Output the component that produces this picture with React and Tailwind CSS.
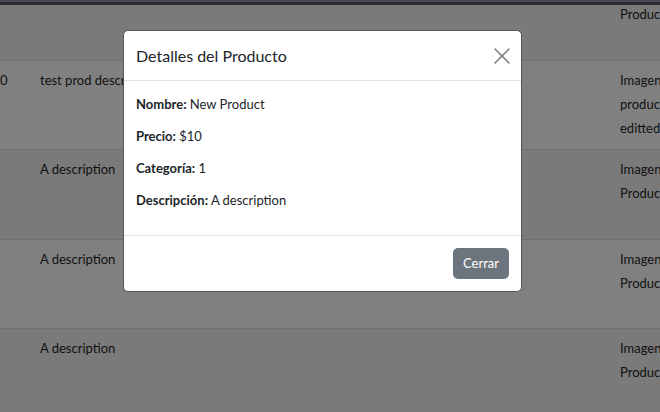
import { X } from 'lucide-react'

const ROWS = [
  { h: 'h-[89px]', bg: 'bg-[#808080]', id: '0', desc: 'test prod description', img: ['Imagen', 'producto', 'editted'] },
  { h: 'h-[90px]', bg: 'bg-[#7a7a7a]', id: '', desc: 'A description', img: ['Imagen', 'Producto'] },
  { h: 'h-[89px]', bg: 'bg-[#808080]', id: '', desc: 'A description', img: ['Imagen', 'Producto'] },
  { h: 'h-[90px]', bg: 'bg-[#7a7a7a]', id: '', desc: 'A description', img: ['Imagen', 'Producto'] },
]

function Row({ row }) {
  return (
    <div className={`flex ${row.h} ${row.bg} border-b border-[#6f7173] text-[#111] text-[13px] leading-[24px] pt-[7px]`}>
      <div className="w-[40px] shrink-0">{row.id}</div>
      <div className="w-[580px] shrink-0 whitespace-nowrap overflow-hidden">{row.desc}</div>
      <div className="flex flex-col whitespace-nowrap">
        {row.img.map(t => <span key={t}>{t}</span>)}
      </div>
    </div>
  )
}

export default function App() {
  return (
    <div className="relative w-[660px] h-[412px] overflow-hidden bg-[#808080]" style={{ fontFamily: 'Lato, "Noto Sans", sans-serif' }}>
      {/* top bar */}
      <div className="h-[2px] bg-[#4b4a58]" />
      <div className="h-[3px] bg-[#2b2a35]" />

      {/* background table (under backdrop) */}
      <div className="flex h-[56px] bg-[#7a7a7a] border-b border-[#6f7173] text-[#111] text-[13px] leading-[24px]">
        <div className="w-[620px] shrink-0" />
        <div className="-mt-[3px] whitespace-nowrap">Producto</div>
      </div>
      {ROWS.map((r, i) => <Row key={i} row={r} />)}

      {/* modal */}
      <div className="absolute left-[123px] top-[30px] w-[399px] bg-white rounded-[5px] border border-[#555] text-[#212529]">
        <div className="flex items-center justify-between h-[50px] pl-[12px] pr-[12px] border-b border-[#dee2e6]">
          <h5 className="text-[16px] leading-[24px]">Detalles del Producto</h5>
          <X size={28} strokeWidth={1.3} className="text-[#7c7c7c] -mr-[7px]" />
        </div>
        <div className="px-[12px] pt-[14px] pb-[12px] text-[13px] leading-[19.2px] flex flex-col gap-[12.8px]">
          <p><b>Nombre:</b> New Product</p>
          <p><b>Precio:</b> $10</p>
          <p><b>Categoría:</b> 1</p>
          <p className="mb-[12.8px]"><b>Descripción:</b> A description</p>
        </div>
        <div className="flex justify-end h-[56px] items-center px-[12px] border-t border-[#dee2e6]">
          <button className="bg-[#6c757d] text-white text-[13px] leading-[19px] w-[56px] h-[31px] rounded-[5px]">Cerrar</button>
        </div>
      </div>
    </div>
  )
}
